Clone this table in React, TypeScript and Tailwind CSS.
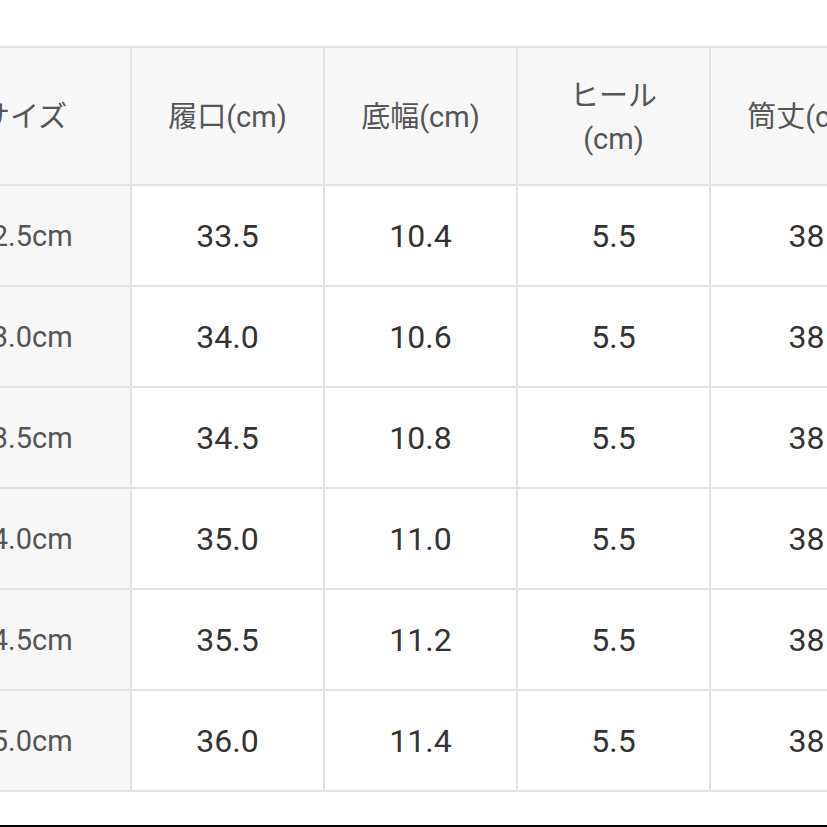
const HEADERS: React.ReactNode[] = [
  "サイズ",
  "履口(cm)",
  "底幅(cm)",
  <>
    ヒール
    <br />
    (cm)
  </>,
  "筒丈(cm)",
];

const ROWS: string[][] = [
  ["22.5cm", "33.5", "10.4", "5.5", "38"],
  ["23.0cm", "34.0", "10.6", "5.5", "38"],
  ["23.5cm", "34.5", "10.8", "5.5", "38"],
  ["24.0cm", "35.0", "11.0", "5.5", "38"],
  ["24.5cm", "35.5", "11.2", "5.5", "38"],
  ["25.0cm", "36.0", "11.4", "5.5", "38"],
];

export default function App() {
  return (
    <div
      className="w-[827px] h-[827px] bg-white overflow-hidden flex flex-col"
      style={{ fontFamily: 'Roboto, "Noto Sans CJK JP", sans-serif' }}
    >
      <div className="pt-[46px]">
        <div className="-ml-[84px] w-max grid grid-cols-[212px_191px_191px_191px_191px] grid-rows-[136px_repeat(6,99px)] gap-[2px] p-[2px] bg-[#e2e2e2]">
          {HEADERS.map((h, i) => (
            <div
              key={i}
              className="bg-[#f7f7f7] flex items-center justify-center pt-[3px] text-center text-[29px] leading-[1.45] text-[#555]"
            >
              <span>{h}</span>
            </div>
          ))}
          {ROWS.map((row) =>
            row.map((cell, j) =>
              j === 0 ? (
                <div
                  key={row[0] + j}
                  className="bg-[#f7f7f7] flex items-center justify-center pt-[2px] text-[29px] text-[#555]"
                >
                  {cell}
                </div>
              ) : (
                <div
                  key={row[0] + j}
                  className="bg-white flex items-center justify-center pt-[1px] text-[32px] text-[#333]"
                >
                  {cell}
                </div>
              )
            )
          )}
        </div>
      </div>
      <div className="mt-auto h-[2px] bg-black" />
    </div>
  );
}
